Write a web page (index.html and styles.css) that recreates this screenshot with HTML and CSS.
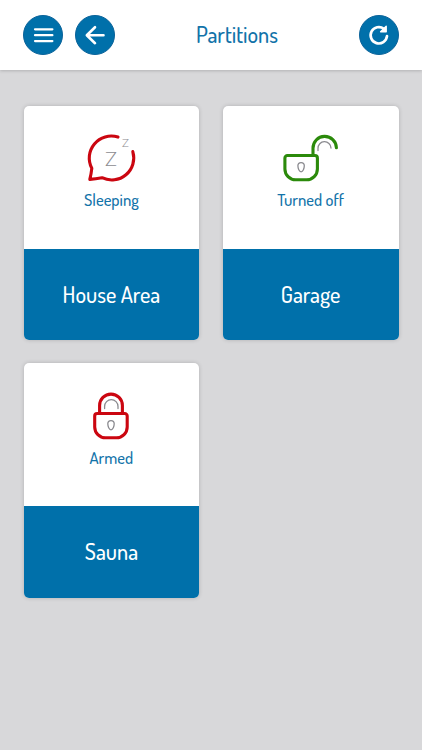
FILE: index.html
```html
<!DOCTYPE html>
<html lang="en">
<head>
  <meta charset="UTF-8" />
  <meta name="viewport" content="width=device-width, initial-scale=1.0"/>
  <title>Partitions</title>
  <link rel="stylesheet" href="styles.css">
</head>
<body>

  <header class="header">
    <div class="header-left">
      <button class="round-btn" aria-label="Menu">
        <svg viewBox="0 0 40 40"><path d="M12 14.3h17.4M12 20.2h17.4M12 26.1h17.4" stroke-width="2.2"/></svg>
      </button>
      <button class="round-btn" aria-label="Back">
        <svg viewBox="0 0 40 40"><path d="M28.5 20.2H12M20 12.2l-8.2 8L20 28.2" stroke-width="2.6"/></svg>
      </button>
    </div>
    <h1 class="title">Partitions</h1>
    <button class="round-btn" aria-label="Refresh">
      <svg viewBox="0 0 40 40">
        <path d="M28 21.2A8.2 8.2 0 1 1 24.9 13.8" stroke-width="2.7"/>
        <path class="arrow" d="M27.2 11.2v5.6h-5.6z"/>
      </svg>
    </button>
  </header>

  <main class="grid">
    <div class="card">
      <div class="card-top">
        <svg class="icon red" viewBox="0 0 60 50">
          <path d="M37 4.1A22 22 0 0 0 10.8 35.3Q10.2 41 8.8 46.4Q14.5 45.8 21 44.7A22 22 0 0 0 51.8 18.6"/>
          <text x="30" y="32.8" font-size="20">Z</text>
          <text x="44.5" y="14" font-size="11.5">Z</text>
        </svg>
        <p class="status">Sleeping</p>
      </div>
      <div class="card-name">House Area</div>
    </div>

    <div class="card">
      <div class="card-top">
        <svg class="icon green" viewBox="0.6 0 60 50">
          <path d="M7 22.5h27.5a2.5 2.5 0 0 1 2.5 2.5v11a10.8 10.8 0 0 1-10.8 10.8H15.3A10.8 10.8 0 0 1 4.5 36V25A2.5 2.5 0 0 1 7 22.5z"/>
          <path d="M32.6 22V15.3a11.7 11.7 0 0 1 23.4-.5"/>
          <path class="thin" d="M37.6 17.6v-2.2a6.5 6.5 0 0 1 13-.4"/>
          <path class="thin" d="M20.7 29.6c2 0 3.2 1.4 3.2 3.2 0 2.4-1.3 6-3.2 6s-3.2-3.6-3.2-6c0-1.8 1.2-3.2 3.2-3.2z"/>
        </svg>
        <p class="status">Turned off</p>
      </div>
      <div class="card-name">Garage</div>
    </div>

    <div class="card">
      <div class="card-top">
        <svg class="icon red" viewBox="0 0 60 50">
          <path d="M16.2 22.5h27.5a2.5 2.5 0 0 1 2.5 2.5v11a10.8 10.8 0 0 1-10.8 10.8H24.5A10.8 10.8 0 0 1 13.7 36V25a2.5 2.5 0 0 1 2.5-2.5z"/>
          <path d="M18.6 22V14.5a11.4 11.4 0 0 1 22.8 0V22"/>
          <path class="thin" d="M23.6 17.6v-2.2a6.7 6.7 0 0 1 13.4 0v2.2"/>
          <path class="thin" d="M30 29.6c2 0 3.2 1.4 3.2 3.2 0 2.4-1.3 6-3.2 6s-3.2-3.6-3.2-6c0-1.8 1.2-3.2 3.2-3.2z"/>
        </svg>
        <p class="status">Armed</p>
      </div>
      <div class="card-name">Sauna</div>
    </div>
  </main>

</body>
</html>
```
FILE: styles.css
```css
* {
  box-sizing: border-box;
  margin: 0;
  padding: 0;
  font-family: 'Dosis', 'Lato', sans-serif;
}

body {
  min-height: 100vh;
  background: #d8d8da;
}

.header {
  display: flex;
  justify-content: space-between;
  align-items: center;
  height: 70px;
  padding: 0 23.4px;
  background: white;
  box-shadow: 0 1px 3px rgba(0,0,0,0.18);
}

.header-left {
  display: flex;
  gap: 12px;
}

.round-btn {
  width: 40px;
  height: 40px;
  border: 1px solid #0b639a;
  border-radius: 50%;
  background: #0070aa;
  cursor: pointer;
}

.round-btn svg {
  display: block;
  width: 40px;
  height: 40px;
  margin: -1px;
  fill: none;
  stroke: white;
  stroke-linecap: round;
  stroke-linejoin: round;
}

.round-btn .arrow {
  fill: white;
  stroke-width: 1.4;
}

.title {
  padding-bottom: 2px;
  color: #1273a9;
  font-size: 22.2px;
  font-weight: 500;
  line-height: 30px;
}

.grid {
  display: grid;
  grid-template-columns: 1fr 1fr;
  gap: 23.4px;
  padding: 35.5px 23.5px;
}

.card {
  overflow: hidden;
  border-radius: 5px;
  background: white;
  box-shadow: 0 0 4px rgba(0,0,0,0.18);
}

.card-top {
  display: flex;
  flex-direction: column;
  align-items: center;
  height: 143px;
  padding-top: 27.4px;
}

.icon {
  width: 60px;
  height: 50px;
  fill: none;
  stroke-width: 3.1;
  stroke-linecap: round;
  stroke-linejoin: round;
}

.red {
  stroke: #cb0610;
}

.green {
  stroke: #2b8a0b;
}

.icon .thin {
  stroke: #8b8b90;
  stroke-width: 1.3;
}

.icon text {
  fill: #8b8b90;
  stroke: none;
  font-family: 'Lato', sans-serif;
  font-weight: 300;
  text-anchor: middle;
}

.status {
  margin-top: 7px;
  color: #1273a9;
  font-size: 16.6px;
  font-weight: 500;
  line-height: 20px;
}

.card-name {
  display: flex;
  align-items: center;
  justify-content: center;
  height: 91.4px;
  padding-bottom: 1px;
  background: #0070aa;
  color: white;
  font-size: 22.2px;
  font-weight: 500;
}
```
